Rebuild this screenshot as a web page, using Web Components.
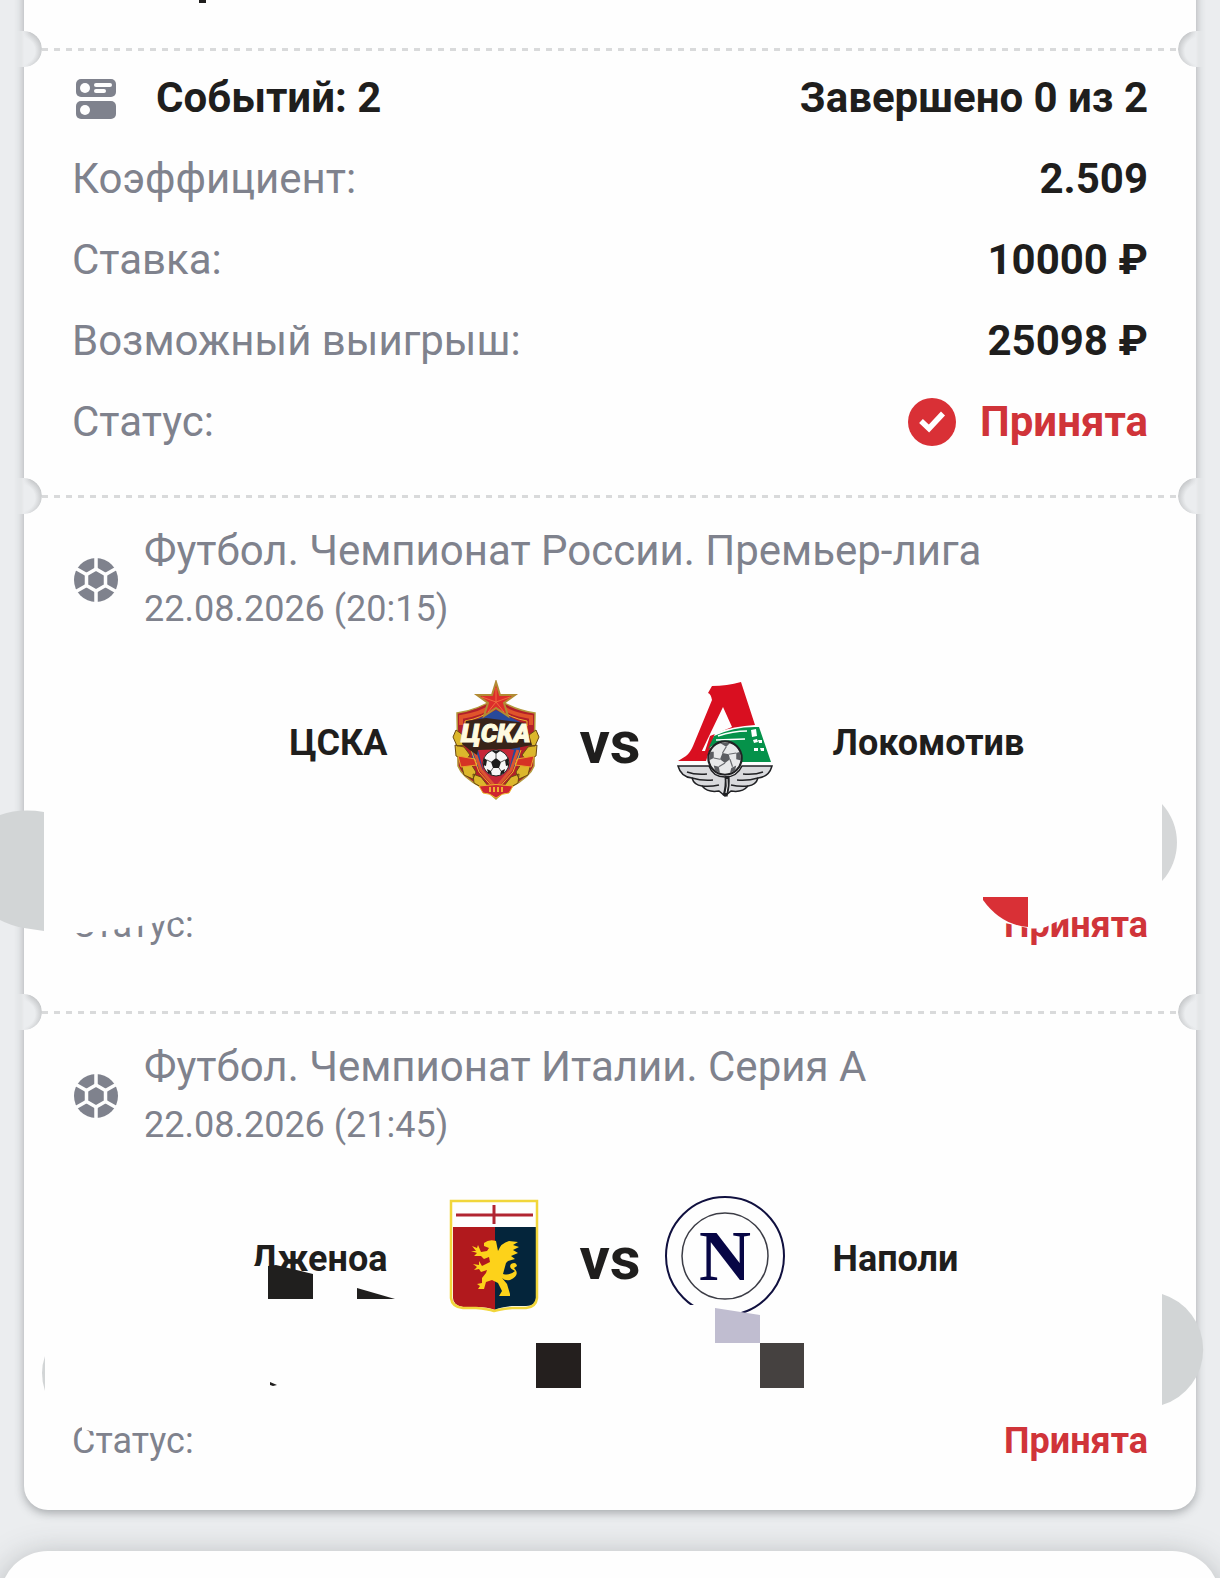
<!DOCTYPE html>
<html lang="ru">
<head>
<meta charset="utf-8">
<meta name="viewport" content="width=device-width, initial-scale=1">
<title>Купон</title>
<style>
  :root {
    --page: #ebedef;
    --card: #fefefe;
    --text: #1f1e1d;
    --muted: #7f828d;
    --accent: #d03439;
    --line: #d9dadb;
  }

  html {
    overflow-x: hidden;
  }

  body {
    margin: 0;
    min-height: 100vh;
    background: var(--page);
    color: var(--text);
    font-family: Roboto, "Open Sans", sans-serif;
    font-size: 42px;
    overflow: hidden;
  }
</style>
</head>
<body>

<bet-ticket>
  <ticket-divider></ticket-divider>
  <ticket-summary></ticket-summary>
  <ticket-divider></ticket-divider>
  <ticket-event league="Футбол. Чемпионат России. Премьер-лига" date="22.08.2026 (20:15)" home="ЦСКА" away="Локомотив" status="Принята">
    <club-logo slot="home" name="cska"></club-logo>
    <club-logo slot="away" name="lokomotiv"></club-logo>
    <svg slot="cover" viewBox="0 498 1220 513" aria-hidden="true">
      <path fill="#d2d5d6" d="M0 815Q20 808 44 812V931L24 928Q9 925 0 920Z"/>
      <path fill="#fefefe" d="M45 900V935L80 933L105 931L140 926L172 919L186 914V900Z"/>
      <path fill="#d5d7d8" d="M1162 804A57 57 0 0 1 1162 881Z"/>
      <path fill="#fefefe" d="M1000 900V922L1028 928Q1042 930 1050 925Q1058 920 1074 917V900Z"/>
      <path fill="#d93036" d="M983 897H1028V927Q1001 925 983 900Z"/>
    </svg>
  </ticket-event>
  <ticket-divider></ticket-divider>
  <ticket-event league="Футбол. Чемпионат Италии. Серия А" date="22.08.2026 (21:45)" home="Дженоа" away="Наполи" status="Принята">
    <club-logo slot="home" name="genoa"></club-logo>
    <club-logo slot="away" name="napoli"></club-logo>
    <svg slot="cover" viewBox="0 1014 1220 496" aria-hidden="true">
      <path fill="#fefefe" d="M246 1266H276V1284H246Z"/>
      <path fill="#201f1e" d="M268 1266L276 1265L313 1274V1299H268Z"/>
      <path fill="#201f1e" d="M357 1288L395 1299H357Z"/>
      <path fill="#201f1e" d="M270 1382L277 1385L273 1386L270 1385Z"/>
      <path fill="#241f1e" d="M536 1343H581V1388H536Z"/>
      <path fill="#fefefe" d="M688 1305H695L741 1313V1320H688Z"/>
      <path fill="#c0bdd0" d="M715 1308L760 1315V1343H715Z"/>
      <path fill="#454140" d="M760 1343H804V1388H760Z"/>
      <path fill="#d2d5d6" d="M1162 1294A58 58 0 0 1 1162 1405Z"/>
      <path fill="#d2d5d6" d="M45 1356Q39 1373 45 1391Z"/>
      <path fill="#fefefe" d="M82 1424H96V1431H90Q86 1429 82 1431Z"/>
    </svg>
  </ticket-event>
</bet-ticket>
<bottom-sheet></bottom-sheet>

<script>
class BetTicket extends HTMLElement {
  constructor () {
    super()
    this.shadow = this.attachShadow({ mode: 'open' })
  }

  connectedCallback () {
    this.render()
  }

  render () {
    this.shadow.innerHTML =
      /* html */`
      <style>
      :host {
        display: block;
        margin: -24px 24px 0;
        background: var(--card);
        border-radius: 0 0 24px 24px;
        box-shadow: 0 3px 10px rgba(60, 65, 70, 0.4);
      }

      .top {
        height: 48px;
        padding-top: 24px;
      }

      /* tail of the heading scrolled above the viewport */
      .top::before {
        content: "";
        display: block;
        width: 7px;
        height: 3px;
        margin-left: 175px;
        background: var(--text);
      }
      </style>

      <div class="top"></div>
      <slot></slot>
      `
  }
}

class TicketDivider extends HTMLElement {
  constructor () {
    super()
    this.shadow = this.attachShadow({ mode: 'open' })
  }

  connectedCallback () {
    this.render()
  }

  render () {
    this.shadow.innerHTML =
      /* html */`
      <style>
      :host {
        display: block;
        position: relative;
        padding: 0 18px;
      }

      .line {
        height: 3px;
        background: repeating-linear-gradient(90deg, var(--line) 0 6px, transparent 6px 12px);
      }

      .notch {
        position: absolute;
        top: -17px;
        left: -8px;
        width: 26px;
        height: 36px;
        border-radius: 0 18px 18px 0;
        background:
          linear-gradient(90deg, var(--page) 7px, transparent 15px),
          radial-gradient(circle at 6px 20px, var(--page) 13px, #c9cbcd 20px);
        -webkit-mask: linear-gradient(90deg, transparent, #000 8px);
        mask: linear-gradient(90deg, transparent, #000 8px);
      }

      .notch.right {
        left: auto;
        right: -8px;
        transform: scaleX(-1);
      }
      </style>

      <div class="line"></div>
      <div class="notch"></div>
      <div class="notch right"></div>
      `
  }
}

class TicketSummary extends HTMLElement {
  constructor () {
    super()
    this.shadow = this.attachShadow({ mode: 'open' })
    this.data = {}
  }

  connectedCallback () {
    this.loadData()
    this.render()
  }

  loadData () {
    this.data = {
      events: 'Событий: 2',
      finished: 'Завершено 0 из 2',
      rows: [
        { label: 'Коэффициент:', value: '2.509' },
        { label: 'Ставка:', value: '10000 ₽' },
        { label: 'Возможный выигрыш:', value: '25098 ₽' }
      ],
      status: 'Принята'
    }
  }

  render () {
    this.shadow.innerHTML =
      /* html */`
      <style>
      :host {
        display: block;
        padding: 6px 48px 33px;
      }

      dl, dd {
        margin: 0;
      }

      .row {
        display: flex;
        align-items: center;
        justify-content: space-between;
        height: 81px;
      }

      .head,
      dd {
        font-weight: 700;
      }

      .events,
      .status {
        display: flex;
        align-items: center;
      }

      .events {
        gap: 36px;
      }

      .status {
        gap: 24px;
        color: var(--accent);
      }

      dt {
        color: var(--muted);
      }

      svg {
        display: block;
        width: 48px;
        height: 48px;
      }
      </style>

      <div class="row head">
        <div class="events">
          <svg viewBox="0 0 48 48" aria-hidden="true">
            <rect x="4" y="5" width="40" height="18" rx="5" fill="#7f828d"/>
            <rect x="4" y="27" width="40" height="18" rx="5" fill="#7f828d"/>
            <g fill="#fefefe">
              <circle cx="13" cy="14" r="5"/>
              <circle cx="13" cy="36" r="5"/>
              <rect x="22" y="9" width="18" height="4" rx="2"/>
              <rect x="22" y="15" width="12" height="4" rx="2"/>
            </g>
          </svg>
          <span>${this.data.events}</span>
        </div>
        <span>${this.data.finished}</span>
      </div>
      <dl>
        ${this.data.rows.map(row => `
          <div class="row"><dt>${row.label}</dt><dd>${row.value}</dd></div>
        `).join('')}
        <div class="row">
          <dt>Статус:</dt>
          <dd class="status">
            <svg viewBox="0 0 48 48" aria-hidden="true">
              <circle cx="24" cy="24" r="24" fill="#d93036"/>
              <path d="M13 23L21 30.500L35 15.500" fill="none" stroke="#fff" stroke-width="5.500"/>
            </svg>
            <span>${this.data.status}</span>
          </dd>
        </div>
      </dl>
      `
  }
}

class TicketEvent extends HTMLElement {
  constructor () {
    super()
    this.shadow = this.attachShadow({ mode: 'open' })
  }

  connectedCallback () {
    this.render()
  }

  render () {
    this.shadow.innerHTML =
      /* html */`
      <style>
      :host {
        display: block;
        position: relative;
        padding: 23px 48px 57px;
        font-size: 36px;
        line-height: 58px;
      }

      :host(:last-of-type) {
        padding-bottom: 40px;
      }

      header {
        display: flex;
        align-items: center;
        gap: 24px;
        color: var(--muted);
      }

      header svg {
        flex: none;
        width: 48px;
        height: 48px;
      }

      h2 {
        margin: 0;
        font-size: 42px;
        font-weight: 400;
        line-height: 59px;
      }

      .teams {
        display: grid;
        grid-template-columns: 1fr 120px 109px 120px 1fr;
        align-items: center;
        margin: 42px 0 96px;
        font-weight: 700;
      }

      .teams span {
        padding-top: 5px;
      }

      .home {
        padding-right: 48px;
        text-align: right;
      }

      .away {
        padding-left: 48px;
      }

      .vs {
        font-size: 60px;
        text-align: center;
      }

      .status {
        display: flex;
        justify-content: space-between;
      }

      .status span {
        color: var(--muted);
      }

      .status strong {
        color: var(--accent);
      }

      ::slotted([slot="cover"]) {
        position: absolute;
        top: 0;
        left: -24px;
        width: calc(100% + 48px);
        pointer-events: none;
      }
      </style>

      <header>
        <svg viewBox="-24 -24 48 48" aria-hidden="true">
          <circle r="22" fill="#7f828d"/>
          <g fill="none" stroke="#fefefe" stroke-width="3.500">
            <path d="M0 -11L9.500 -5.500V5.500L0 11L-9.500 5.500V-5.500Z"/>
            <path d="M0 -11V-24M0 11V24M9.500 -5.500L21 -12M9.500 5.500L21 12M-9.500 5.500L-21 12M-9.500 -5.500L-21 -12"/>
          </g>
        </svg>
        <div>
          <h2>${this.getAttribute('league')}</h2>
          <time>${this.getAttribute('date')}</time>
        </div>
      </header>
      <div class="teams">
        <span class="home">${this.getAttribute('home')}</span>
        <slot name="home"></slot>
        <span class="vs">vs</span>
        <slot name="away"></slot>
        <span class="away">${this.getAttribute('away')}</span>
      </div>
      <div class="status">
        <span>Статус:</span>
        <strong>${this.getAttribute('status')}</strong>
      </div>
      <slot name="cover"></slot>
      `
  }
}

const ball = /* html */`
  <circle r="13" fill="#f7f7f7" stroke="#222" stroke-width="1"/>
  <path fill="#1b1b1b" d="M0 -5L5 -1L3 5H-3L-5 -1ZM-4 -12L4 -12L0 -9ZM12 -5L9 -3L10 3L13 2ZM-12 -5L-9 -3L-10 3L-13 2ZM5 8L9 6L8 10L4 12ZM-5 8L-9 6L-8 10L-4 12Z"/>
  <path stroke="#555" stroke-width="1" d="M0 -5V-9M5 -1L9 -3M3 5L5 8M-3 5L-5 8M-5 -1L-9 -3"/>
`

const logos = {
  cska: /* html */`
    <path fill="#b2202a" stroke="#b39a3c" stroke-width="1.500" d="M21 33Q42 30 60 18Q78 30 99 33L98 86Q94 97 75 107Q67 112 60 119Q53 112 45 107Q26 97 22 86Z"/>
    <path fill="#28499a" d="M60 30L84 42V80L60 108L36 80V42Z"/>
    <path fill="#c62638" d="M60 66L78 70L73 90L60 108L47 90L42 70Z"/>
    <path fill="none" stroke="#e0542b" stroke-width="4" d="M25 45V37Q45 34 58 25M95 45V37Q75 34 62 25"/>
    <path fill="none" stroke="#e9b62d" stroke-width="1" d="M29 46V41Q46 38 57 29M91 46V41Q74 38 63 29"/>
    <g fill="#dcb72c" stroke="#6b4a14" stroke-width="1">
      <path d="M20 50L27 55L29 65L21 66L17 57ZM19 65L28 67L34 75L30 80L20 76ZM25 83L35 84L40 92L37 99L28 95ZM37 94L45 97L52 106L47 108L38 103Z"/>
      <path d="M100 50L93 55L91 65L99 66L103 57ZM101 65L92 67L86 75L90 80L100 76ZM95 83L85 84L80 92L83 99L92 95ZM83 94L75 97L68 106L73 108L82 103Z"/>
    </g>
    <path fill="#d53325" stroke="#e8a42c" stroke-width="1" d="M22 76L39 79L41 85L25 87ZM98 76L81 79L79 85L95 87Z"/>
    <path fill="none" stroke="#dc5530" stroke-width="3" d="M38 70L45 90L60 108L75 90L82 70"/>
    <path fill="none" stroke="#efb02b" stroke-width="1" d="M35 70L43 92L60 111L77 92L85 70"/>
    <path fill="#ce2630" stroke="#edb42d" stroke-width="1" d="M43 106Q60 103 77 106L73 113Q66 113 60 118Q54 113 47 113Z"/>
    <path stroke="#f0ad32" stroke-width="2" d="M54 107V112M58 107V112M62 107V112M66 107V112"/>
    <path fill="#dc2e2b" stroke="#b28b33" stroke-width="2" d="M60 2L64 15H79L68 23L72 36L60 28L48 36L52 23L41 15H56Z"/>
    <path fill="none" stroke="#f06b3e" stroke-width="1" d="M60 8V22L74 17M60 22L68 32M60 22L52 32M60 22L46 17"/>
    <path fill="#382319" d="M26 64L30 41L50 38L90 43L96 65L75 69L42 70L41 75L35 71Z"/>
    <text x="60" y="62" text-anchor="middle" font-family="Roboto, sans-serif" font-size="26" font-weight="900" font-style="italic" fill="#fffbe0" stroke="#fffbe0" stroke-width="1">ЦСКА</text>
    <g transform="translate(60 83)">${ball}</g>
  `,
  lokomotiv: /* html */`
    <path fill="#d90f20" d="M47 6Q62 6 76 2L90 45Q69 46 50 53L41 81H13L21 76Q25 73 28 66L47 20Q46 14 43 13Z"/>
    <path fill="#fefefe" d="M58 27L67 47L45 56L38 77L33 79Z"/>
    <path fill="#d90f20" d="M41 71L38 81H30L33 71Z"/>
    <path fill="#05924a" d="M49 56Q70 46 94 47L106 82H71Q70 65 57 63Q49 63 43 69Z"/>
    <path fill="none" stroke="#fff" stroke-width="1.500" d="M53 56Q68 51 82 51M51 60L80 59"/>
    <path fill="#fff" d="M86 50L91 49L92 56L87 57ZM88 60L92 59L93 62L89 63ZM93 60H97V63H94ZM89 68H93V71H89ZM95 68H99V71H96Z"/>
    <path fill="#d9dadd" stroke="#202124" stroke-width="1.500" d="M13 86H44Q48 97 60 97Q72 97 77 86H107Q104 97 93 98Q91 105 83 106Q77 113 66 111L60 116L54 111Q43 113 37 106Q29 105 27 98Q16 97 13 86Z"/>
    <path fill="none" stroke="#202124" stroke-width="1.500" d="M22 92Q30 95 42 94M27 98Q37 101 48 100M37 106Q45 107 54 105M98 92Q90 95 78 94M93 98Q83 101 72 100M83 106Q75 107 66 105"/>
    <path fill="none" stroke="#202124" stroke-width="5" d="M62 96Q63 106 60 116"/>
    <path fill="none" stroke="#fff" stroke-width="1" d="M62 99Q63 106 61 113"/>
    <g transform="translate(60 78) scale(1.250)">
      <circle r="13" fill="#e8e9ea" stroke="#222" stroke-width="1"/>
      <path fill="#5b5d61" d="M-2 -4L3 -3L4 1L0 4L-4 1ZM-4 -12L4 -12L1 -9ZM12 -5L9 -4L9 1L13 2ZM-12 -5L-9 -5L-9 0L-13 2ZM5 8L9 6L8 10L4 12ZM-5 7L-9 6L-8 10L-4 12Z"/>
      <path fill="none" stroke="#6a6c70" stroke-width="1" d="M-2 -4L1 -9M3 -3L9 -4M4 1L6 7M0 4L-5 7M-4 1L-9 0"/>
    </g>
    <circle cx="60" cy="78" r="17" fill="none" stroke="#202124" stroke-width="1.500"/>
  `,
  genoa: /* html */`
    <path fill="#fefefe" d="M15 5H102V104Q101 112 90 112H76Q64 113 58 116Q52 113 40 112H27Q16 112 15 104Z"/>
    <path fill="#b1191d" d="M17 31H59V114Q52 111 40 111H27Q17 109 17 102Z"/>
    <path fill="#04253b" d="M59 31H101V102Q100 110 90 110H76Q64 111 59 114Z"/>
    <path fill="none" stroke="#f1d63b" stroke-width="2.500" d="M15 5H101V102Q100 111 90 112H76Q64 113 58 115Q52 113 40 112H27Q16 111 15 102Z"/>
    <path stroke="#b12531" stroke-width="3" d="M20 19H97M58 9V28"/>
    <path fill="#fdd21a" d="M48 47Q53 43 60 45L62 55Q65 47 73 45L82 46L77 49L83 51L77 54L82 57L75 60L79 63L72 65L70 67L67 78Q74 80 79 75Q72 72 75 68Q80 65 81 70L78 72Q85 79 74 84Q69 85 66 82L71 88L74 98V100H63L66 95L62 87L56 84L50 86L48 93L42 93L44 90L41 88L46 87V82L50 77L51 74L45 76L43 73L38 74L41 71L37 68L43 69V65L46 70L54 66L53 61L48 63L45 60L38 60L41 57L35 55L40 55L36 50L41 52L42 49L45 56L51 55L53 52L48 50Z"/>
  `,
  napoli: /* html */`
    <circle cx="60" cy="60" r="59" fill="#fefefe" stroke="#10103f" stroke-width="2"/>
    <circle cx="60" cy="60" r="43" fill="none" stroke="#3c3d46" stroke-width="1.500"/>
    <text x="60" y="84" text-anchor="middle" font-family="Liberation Serif, serif" font-size="72" font-weight="700" fill="#070645">N</text>
  `
}

class ClubLogo extends HTMLElement {
  constructor () {
    super()
    this.shadow = this.attachShadow({ mode: 'open' })
  }

  connectedCallback () {
    this.render()
  }

  render () {
    this.shadow.innerHTML =
      /* html */`
      <style>
      :host,
      svg {
        display: block;
        width: 120px;
        height: 120px;
      }
      </style>

      <svg viewBox="0 0 120 120" aria-hidden="true">${logos[this.getAttribute('name')]}</svg>
      `
  }
}

class BottomSheet extends HTMLElement {
  constructor () {
    super()
    this.shadow = this.attachShadow({ mode: 'open' })
  }

  connectedCallback () {
    this.render()
  }

  render () {
    this.shadow.innerHTML =
      /* html */`
      <style>
      :host {
        display: block;
        height: 27px;
        margin-top: 41px;
      }

      .sheet {
        height: 96px;
        background: var(--card);
        border-radius: 48px 48px 0 0;
        box-shadow: 0 6px 32px rgba(60, 65, 70, 0.35);
      }
      </style>

      <div class="sheet"></div>
      `
  }
}

customElements.define('bet-ticket', BetTicket)
customElements.define('ticket-divider', TicketDivider)
customElements.define('ticket-summary', TicketSummary)
customElements.define('ticket-event', TicketEvent)
customElements.define('club-logo', ClubLogo)
customElements.define('bottom-sheet', BottomSheet)
</script>
</body>
</html>
